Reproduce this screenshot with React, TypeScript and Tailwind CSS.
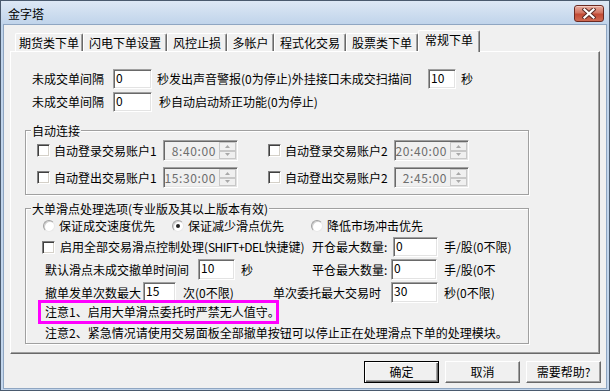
import React from "react";

const SUNKEN =
  "border border-t-[#a0a0a0] border-l-[#a0a0a0] border-r-white border-b-white shadow-[inset_1px_1px_0_#696969,inset_-1px_-1px_0_#e3e3e3]";
const RAISED =
  "border border-t-white border-l-white border-r-[#696969] border-b-[#696969] shadow-[inset_-1px_-1px_0_#a0a0a0]";

function Field({ v, cls }: { v: string; cls: string }) {
  return (
    <div className={`${SUNKEN} bg-white flex items-start pl-[2px] pt-[1px] shrink-0 ${cls}`}>
      {v}
    </div>
  );
}

function Check() {
  return (
    <span className="w-[13px] h-[13px] shrink-0 bg-white border border-t-[#808080] border-l-[#808080] border-r-white border-b-white shadow-[inset_1px_1px_0_#404040,inset_-1px_-1px_0_#d4d0c8]" />
  );
}

function Radio({ on }: { on?: boolean }) {
  return (
    <span className="w-[12px] h-[12px] shrink-0 rounded-full bg-white border border-t-[#a0a0a0] border-l-[#a0a0a0] border-r-[#e8e8e8] border-b-[#e8e8e8] shadow-[inset_1px_1px_0_#d0d0d0] flex items-center justify-center">
      {on && <span className="w-[4px] h-[4px] rounded-full bg-[#222]" />}
    </span>
  );
}

function SpinBtn({ up }: { up?: boolean }) {
  return (
    <div className="flex-1 bg-[#f0f0f0] border border-[#c8c8c8] flex items-center justify-center">
      <svg width="5" height="3" viewBox="0 0 5 3">
        {up ? <path d="M0 3 L2.5 0 L5 3Z" fill="#a8a8a8" /> : <path d="M0 0 L2.5 3 L5 0Z" fill="#a8a8a8" />}
      </svg>
    </div>
  );
}

function Spin({ t }: { t: string }) {
  return (
    <div className={`${SUNKEN} w-[75px] h-[21px] bg-[#f0f0f0] flex shrink-0`}>
      <div className="flex-1 flex items-center justify-end pr-[3px] text-[#6d6d6d] tracking-[0.6px]">{t}</div>
      <div className="w-[17px] flex flex-col py-[1px] mr-[1px]">
        <SpinBtn up />
        <SpinBtn />
      </div>
    </div>
  );
}

function Group({ title, cls, children }: { title: string; cls: string; children: React.ReactNode }) {
  return (
    <div className={`relative border border-[#a0a0a0] shadow-[inset_1px_1px_0_#fff,1px_1px_0_#fff] ${cls}`}>
      <span className="absolute left-[5px] top-[-7px] px-[1px] bg-[#f0f0f0] leading-[14px]">{title}</span>
      {children}
    </div>
  );
}

function Tab({ label, w, sel }: { label: string; w: string; sel?: boolean }) {
  if (sel) {
    return (
      <div
        className={`${w} relative z-10 -mb-[1px] h-[22px] bg-[#f0f0f0] border border-b-0 border-t-white border-l-white border-r-[#696969] shadow-[inset_-1px_0_0_#a0a0a0] rounded-t-[2px] flex items-center justify-center pb-[4px]`}
      >
        {label}
      </div>
    );
  }
  return (
    <div
      className={`${w} h-[18px] bg-[#f0f0f0] border border-b-0 border-t-white border-l-white border-r-[#696969] shadow-[inset_-1px_0_0_#a0a0a0] rounded-t-[2px] flex items-center justify-center`}
    >
      {label}
    </div>
  );
}

function Btn({ label, def }: { label: string; def?: boolean }) {
  if (def) {
    return (
      <div className="w-[75px] h-[22px] bg-[#f0f0f0] border border-black shadow-[inset_1px_1px_0_#fff,inset_-1px_-1px_0_#696969,inset_-2px_-2px_0_#a0a0a0] flex items-center justify-center">
        {label}
      </div>
    );
  }
  return (
    <div className={`${RAISED} w-[75px] h-[22px] bg-[#f0f0f0] flex items-center justify-center`}>{label}</div>
  );
}

export default function App() {
  return (
    <div className="w-[610px] h-[391px] border border-[#4a5a6e] bg-[linear-gradient(to_bottom,#dde8f5,#bfd3ea_24px,#c3d6ec)] flex flex-col font-['Noto_Sans_CJK_SC','Noto_Sans',sans-serif] text-[12px] leading-[14px] text-black whitespace-nowrap overflow-hidden">
      {/* title bar */}
      <div className="h-[23px] flex items-start justify-between">
        <span className="ml-[7px] mt-[5px] leading-[16px] text-black">金字塔</span>
        <div className="mt-[4px] mr-[5px] w-[30px] h-[17px] rounded-[3px] border border-[#6b2a22] bg-[linear-gradient(to_bottom,#e8ab9e,#d27562_45%,#c24a35_55%,#cf6a52)] shadow-[inset_0_1px_0_#f3c9bf] flex items-center justify-center">
          <svg width="14" height="11" viewBox="0 0 14 11">
            <path d="M2.5 1.5 L11.5 9.5 M11.5 1.5 L2.5 9.5" stroke="#5a2a24" strokeWidth="4.2" strokeLinecap="square" />
            <path d="M2.5 1.5 L11.5 9.5 M11.5 1.5 L2.5 9.5" stroke="#ffffff" strokeWidth="2.2" strokeLinecap="square" />
          </svg>
        </div>
      </div>

      {/* client */}
      <div className="ml-[2px] mr-[2px] mb-[1px] flex-1 border border-[#8fa6c2] bg-[#f0f0f0] flex flex-col pt-[5px]">
        {/* tabs */}
        <div className="h-[21px] flex items-end pl-[11px]">
          <Tab label="期货类下单" w="w-[68px]" />
          <Tab label="闪电下单设置" w="w-[84px]" />
          <Tab label="风控止损" w="w-[60px]" />
          <Tab label="多帐户" w="w-[47px]" />
          <Tab label="程式化交易" w="w-[72px]" />
          <Tab label="股票类下单" w="w-[72px]" />
          <Tab label="常规下单" w="w-[62px]" sel />
        </div>

        {/* panel */}
        <div className="mx-[6px] h-[303px] bg-[#f0f0f0] border border-t-white border-l-white border-r-[#696969] border-b-[#696969] shadow-[inset_-1px_-1px_0_#a0a0a0] flex flex-col">
          {/* row 1 */}
          <div className="mt-[17px] h-[20px] flex items-center pl-[21px]">
            <span className="w-[81px]">未成交单间隔</span>
            <Field v="0" cls="w-[39px] h-[20px]" />
            <span className="ml-[5px] w-[271px]">秒发出声音警报(0为停止)外挂接口未成交扫描间</span>
            <Field v="10" cls="w-[28px] h-[20px]" />
            <span className="ml-[5px]">秒</span>
          </div>
          {/* row 2 */}
          <div className="mt-[3px] h-[20px] flex items-center pl-[21px]">
            <span className="w-[81px]">未成交单间隔</span>
            <Field v="0" cls="w-[39px] h-[20px]" />
            <span className="ml-[7px]">秒自动启动矫正功能(0为停止)</span>
          </div>

          {/* group 1 */}
          <Group title="自动连接" cls="mt-[18px] ml-[14px] w-[504px] h-[65px] pt-[9px]">
            <div className="h-[21px] flex items-center pl-[11px]">
              <div className="w-[126px] flex items-center gap-[4px]">
                <Check />
                <span>自动登录交易账户1</span>
              </div>
              <Spin t="8:40:00" />
              <div className="ml-[30px] w-[126px] flex items-center gap-[4px]">
                <Check />
                <span>自动登录交易账户2</span>
              </div>
              <Spin t="20:40:00" />
            </div>
            <div className="mt-[6px] h-[21px] flex items-center pl-[11px]">
              <div className="w-[126px] flex items-center gap-[4px]">
                <Check />
                <span>自动登出交易账户1</span>
              </div>
              <Spin t="15:30:00" />
              <div className="ml-[30px] w-[126px] flex items-center gap-[4px]">
                <Check />
                <span>自动登出交易账户2</span>
              </div>
              <Spin t="2:45:00" />
            </div>
          </Group>

          {/* group 2 */}
          <Group title="大单滑点处理选项(专业版及其以上版本有效)" cls="mt-[13px] ml-[14px] w-[504px] h-[136px] pt-[10px]">
            <div className="h-[14px] flex items-center pl-[17px]">
              <div className="w-[129px] flex items-center gap-[4px]">
                <Radio />
                <span>保证成交速度优先</span>
              </div>
              <div className="w-[139px] flex items-center gap-[4px]">
                <Radio on />
                <span>保证减少滑点优先</span>
              </div>
              <div className="flex items-center gap-[4px]">
                <Radio />
                <span>降低市场冲击优先</span>
              </div>
            </div>

            <div className="mt-[4px] h-[20px] flex items-center pl-[16px]">
              <div className="w-[270px] flex items-center gap-[5px]">
                <Check />
                <span>
                  启用全部交易滑点控制处理(<span className="tracking-[-0.6px]">SHIFT+DEL</span>快捷键)
                </span>
              </div>
              <span className="w-[81px]">开仓最大数量:</span>
              <Field v="0" cls="w-[45px] h-[20px]" />
              <span className="ml-[6px]">手/股(0不限)</span>
            </div>

            <div className="mt-[2px] h-[21px] flex items-center pl-[19px]">
              <div className="w-[267px] flex items-center">
                <span className="w-[153px]">默认滑点未成交撤单时间间</span>
                <Field v="10" cls="w-[37px] h-[21px]" />
                <span className="ml-[6px]">秒</span>
              </div>
              <span className="w-[79px]">平仓最大数量:</span>
              <Field v="0" cls="w-[46px] h-[21px]" />
              <span className="ml-[7px]">手/股(0不</span>
            </div>

            <div className="mt-[2px] h-[21px] flex items-center pl-[19px]">
              <span className="w-[98px]">撤单发单次数最大</span>
              <Field v="15" cls="w-[33px] h-[21px]" />
              <span className="ml-[7px] w-[90px]">次(0不限)</span>
              <span className="w-[118px]">单次委托最大交易时</span>
              <Field v="30" cls="w-[47px] h-[21px]" />
              <span className="ml-[6px]">秒(0不限)</span>
            </div>

            <div className="relative z-10 -mt-[3px] ml-[12px] w-[241px] h-[24px] border-[3px] border-[#ff00ff] flex items-center pl-[4px]">
              注意1、启用大单滑点委托时严禁无人值守。
            </div>

            <div className="mt-[2px] h-[14px] flex items-center pl-[19px]">
              注意2、紧急情况请使用交易面板全部撤单按钮可以停止正在处理滑点下单的处理模块。
            </div>
          </Group>
        </div>

        {/* buttons */}
        <div className="mt-[7px] h-[22px] flex justify-end gap-[6px] pr-[5px]">
          <Btn label="确定" def />
          <Btn label="取消" />
          <Btn label="需要帮助?" />
        </div>
      </div>
    </div>
  );
}
